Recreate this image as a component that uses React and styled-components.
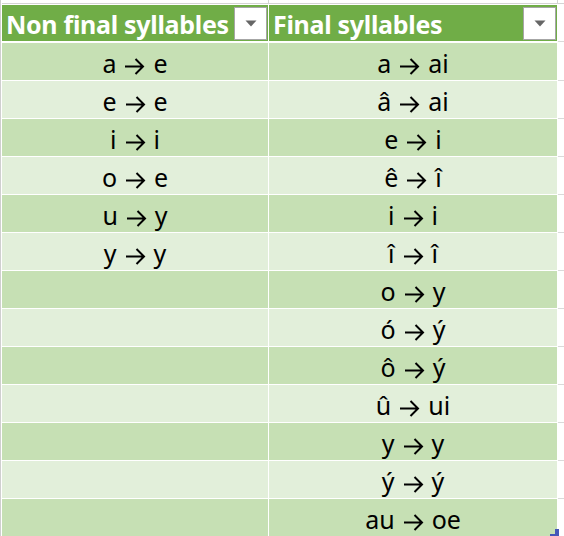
import React from "react";
import styled, { createGlobalStyle } from "styled-components";

const GlobalStyle = createGlobalStyle`
  html, body {
    margin: 0;
    padding: 0;
    background: #ffffff;
  }
  body {
    font-family: "Noto Sans", "Liberation Sans", sans-serif;
    overflow: hidden;
  }
`;

const Sheet = styled.div`
  width: 564px;
  height: 536px;
  overflow: hidden;
  background: #ffffff;
  border-left: 1px solid #cfcfcf;
  padding-left: 1px;
  box-sizing: border-box;
`;

const GridRow = styled.div`
  display: grid;
  grid-template-columns: 266px 288px 1fr;
  column-gap: 1px;
  height: ${(p) => p.$h}px;
  border-bottom: ${(p) => p.$gap}px solid #ffffff;
`;

const TopCell = styled.div`
  border-bottom: 1px solid #d4d4d4;
  border-right: 1px solid #d4d4d4;
  margin-right: -1px;
`;

const Table = styled.div`
  position: relative;
`;

const HeadCell = styled.div`
  display: flex;
  align-items: flex-start;
  justify-content: space-between;
  background: #70ad47;
  color: #ffffff;
  font-weight: 700;
  font-size: 25px;
  line-height: 36px;
  padding-left: 4px;
  padding-top: 1px;
  box-sizing: border-box;
  letter-spacing: -0.3px;
  overflow: hidden;
  white-space: nowrap;
`;

const FilterButton = styled.div`
  width: 31px;
  height: 31px;
  margin-top: 1px;
  margin-right: 1px;
  background: #ffffff;
  border: 1px solid #a6a6a6;
  display: flex;
  align-items: center;
  justify-content: center;
`;

const Cell = styled.div`
  background: ${(p) => (p.$dark ? "#c6e0b4" : "#e2efda")};
  color: #000000;
  font-size: 25px;
  line-height: 34px;
  text-align: center;
  white-space: nowrap;
  padding-top: 3px;
  box-sizing: border-box;
  overflow: hidden;
`;

const ArrowIcon = styled.svg`
  display: inline-block;
  vertical-align: -2px;
  margin: 0 8px;
`;

const Outside = styled.div`
  border-bottom: 1px solid #dadada;
  margin-bottom: -1px;
`;

const Handle = styled.svg`
  position: absolute;
  left: 548px;
  bottom: -2px;
`;

const left = [
  ["a", "e"],
  ["e", "e"],
  ["i", "i"],
  ["o", "e"],
  ["u", "y"],
  ["y", "y"],
];
const right = [
  ["a", "ai"],
  ["â", "ai"],
  ["e", "i"],
  ["ê", "î"],
  ["i", "i"],
  ["î", "î"],
  ["o", "y"],
  ["ó", "ý"],
  ["ô", "ý"],
  ["û", "ui"],
  ["y", "y"],
  ["ý", "ý"],
  ["au", "oe"],
];

function Arrow() {
  return (
    <ArrowIcon width="21" height="17" viewBox="0 0 21 17" role="img" aria-label="→">
      <path
        d="M1 8.5 H19 M11.5 1 L19 8.5 L11.5 16"
        fill="none"
        stroke="#000000"
        strokeWidth="2"
      />
    </ArrowIcon>
  );
}

function Rule({ pair }) {
  if (!pair) return null;
  return (
    <>
      {pair[0]}
      <Arrow />
      {pair[1]}
    </>
  );
}

function Filter() {
  return (
    <FilterButton>
      <svg width="12" height="7" viewBox="0 0 12 7">
        <path d="M0.5 0.5 L11.5 0.5 L6 6.5 Z" fill="#666666" />
      </svg>
    </FilterButton>
  );
}

export default function App() {
  return (
    <>
      <GlobalStyle />
      <Sheet>
        <GridRow $h={4} $gap={1}>
          <TopCell />
          <TopCell />
          <div style={{ borderBottom: "1px solid #d4d4d4" }} />
        </GridRow>
        <Table>
          <GridRow $h={36} $gap={2}>
            <HeadCell>
              Non final syllables
              <Filter />
            </HeadCell>
            <HeadCell>
              Final syllables
              <Filter />
            </HeadCell>
            <Outside />
          </GridRow>
          {right.map((r, i) => (
            <GridRow key={i} $h={37} $gap={1}>
              <Cell $dark={i % 2 === 0}>
                <Rule pair={left[i]} />
              </Cell>
              <Cell $dark={i % 2 === 0}>
                <Rule pair={r} />
              </Cell>
              <Outside />
            </GridRow>
          ))}
          <Handle width="9" height="10" viewBox="0 0 9 10">
            <rect x="5" y="0" width="4" height="10" fill="#4458b8" />
            <rect x="0" y="5" width="9" height="5" fill="#4458b8" />
          </Handle>
        </Table>
      </Sheet>
    </>
  );
}
